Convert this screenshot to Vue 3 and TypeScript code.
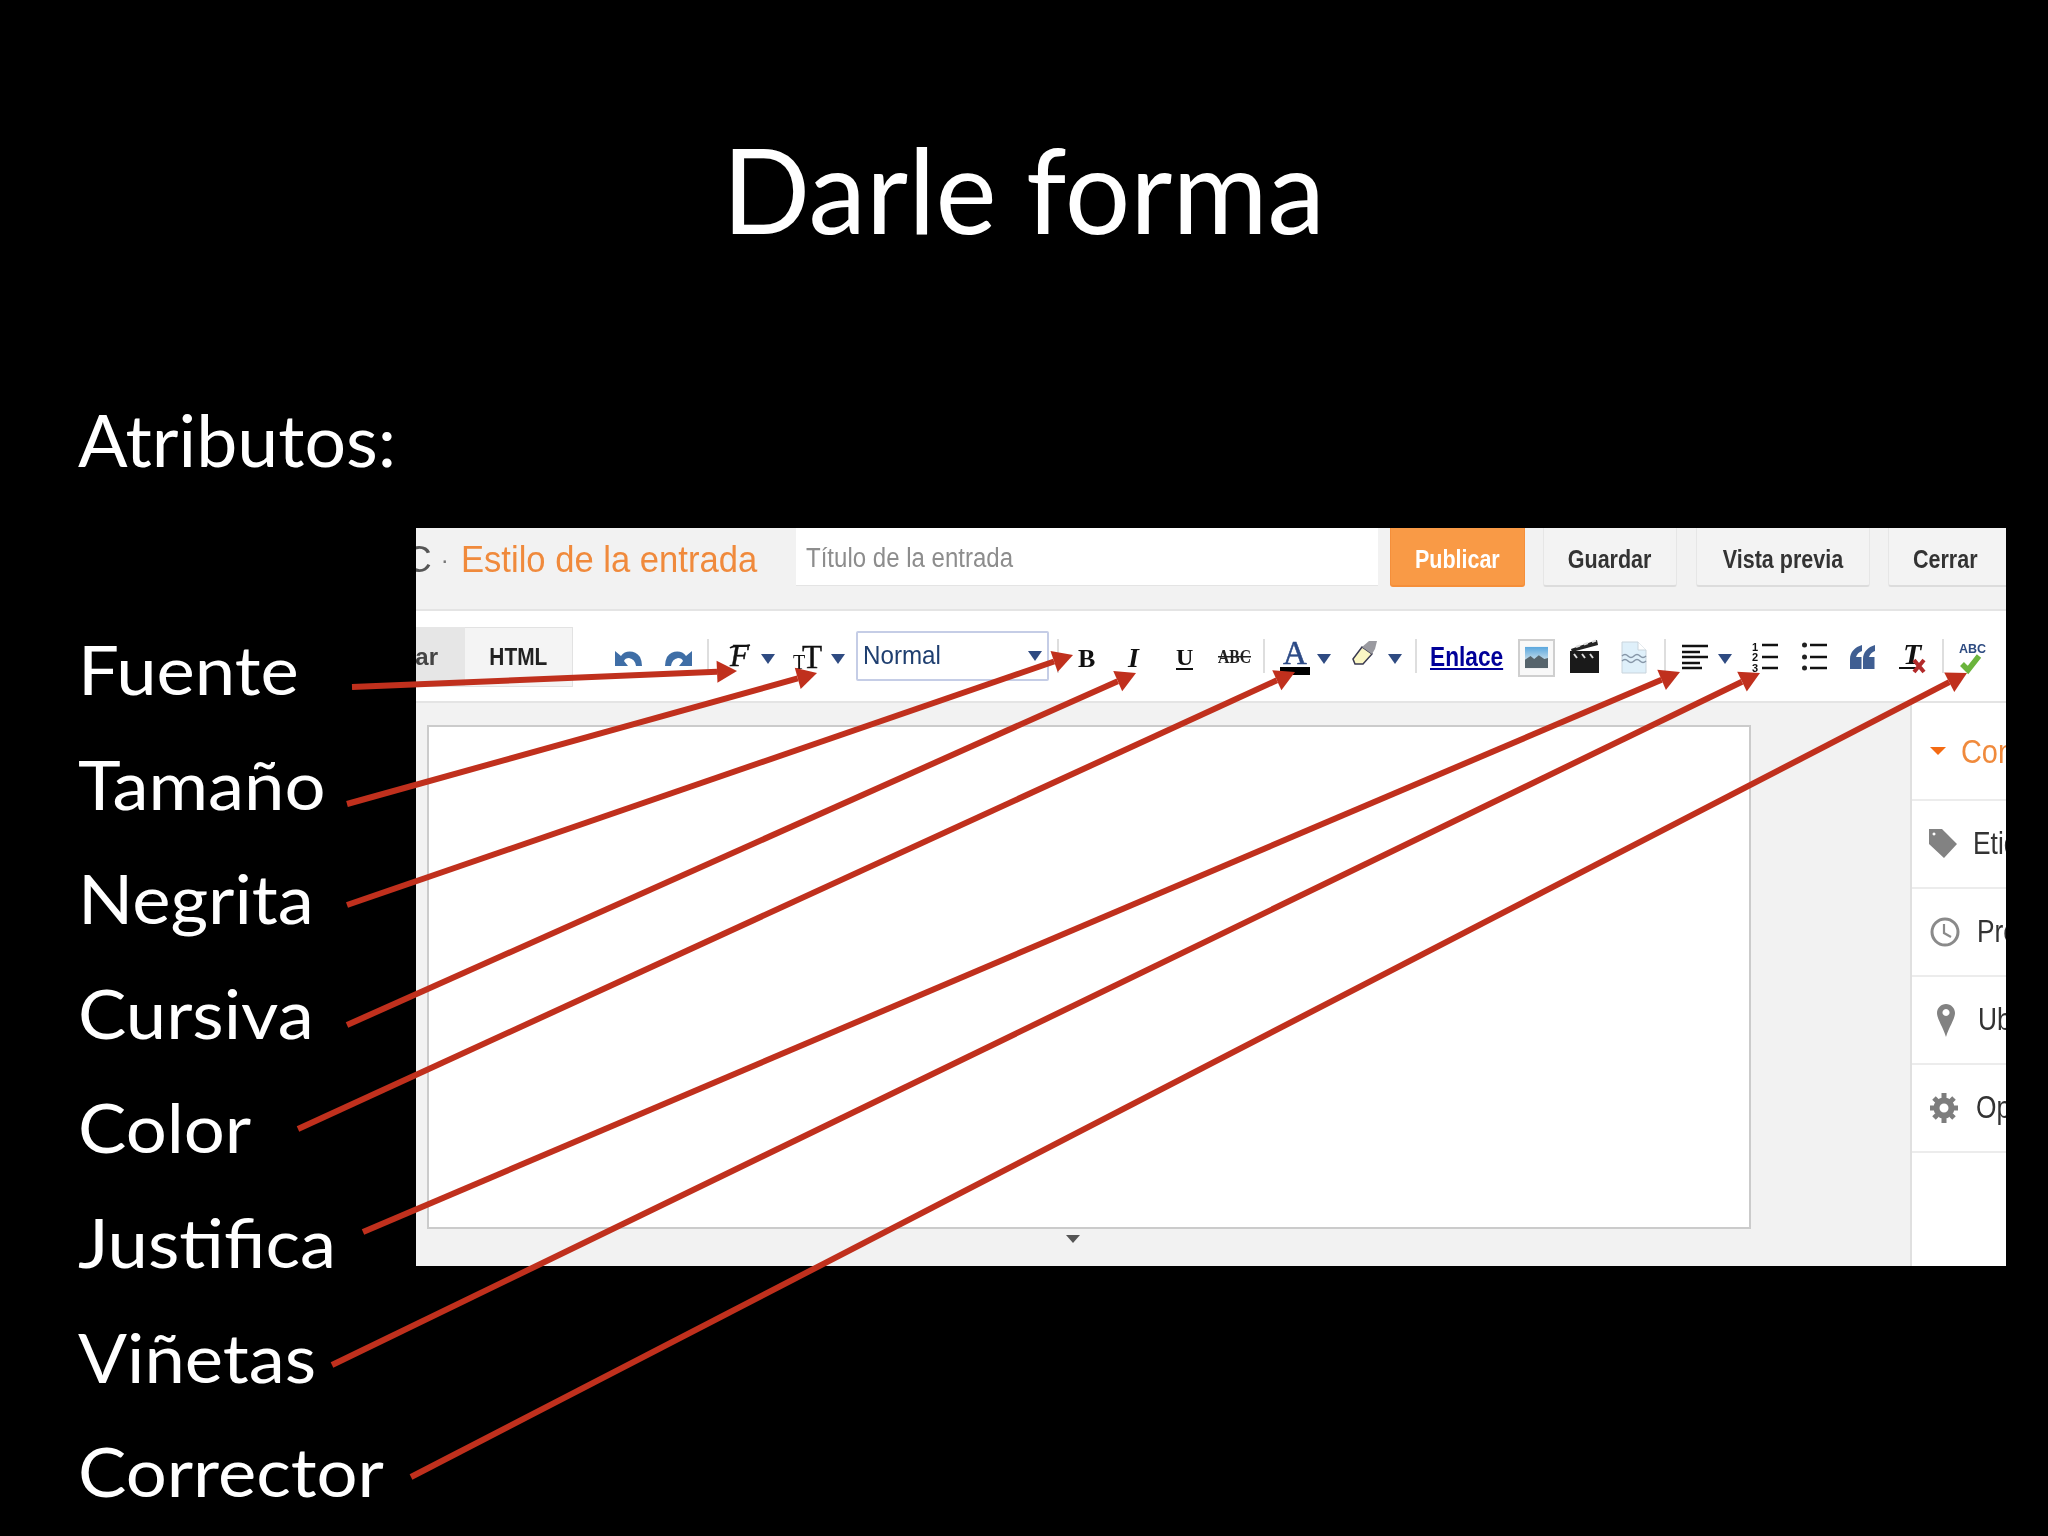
<script setup lang="ts">
interface Arrow { x1: number; y1: number; x2: number; y2: number }
const raw: Arrow[] = [
  { x1: 352, y1: 687, x2: 737, y2: 671 },
  { x1: 347, y1: 804, x2: 817, y2: 673 },
  { x1: 347, y1: 905, x2: 1073, y2: 655 },
  { x1: 347, y1: 1025, x2: 1136, y2: 673 },
  { x1: 298, y1: 1129, x2: 1295, y2: 672 },
  { x1: 363, y1: 1232, x2: 1680, y2: 672 },
  { x1: 332, y1: 1365, x2: 1760, y2: 673 },
  { x1: 411, y1: 1477, x2: 1967, y2: 673 },
]
const arrows = raw.map((a) => {
  const dx = a.x2 - a.x1
  const dy = a.y2 - a.y1
  const len = Math.hypot(dx, dy)
  const ux = dx / len
  const uy = dy / len
  const bx = a.x2 - ux * 20
  const by = a.y2 - uy * 20
  const head = `${a.x2},${a.y2} ${bx - uy * 11},${by + ux * 11} ${bx + uy * 11},${by - ux * 11}`
  return { ...a, bx, by, head }
})
const labels = ['Fuente', 'Tamaño', 'Negrita', 'Cursiva', 'Color', 'Justifica', 'Viñetas', 'Corrector']
</script>

<template>
  <div class="slide">
    <h1 class="title"><span>Darle forma</span></h1>
    <div class="content">
      <div class="left">
        <div class="attr"><span>Atributos:</span></div>
        <ul class="labels">
          <li v-for="l in labels" :key="l"><span>{{ l }}</span></li>
        </ul>
      </div>
      <div class="panel">
        <div class="head">
          <div class="crumb">
            <span class="c">C</span><span class="dot">·</span><span class="post">Estilo de la entrada</span>
          </div>
          <div class="input"><span>Título de la entrada</span></div>
          <div class="btn publish"><span>Publicar</span></div>
          <div class="btn save"><span>Guardar</span></div>
          <div class="btn preview"><span>Vista previa</span></div>
          <div class="btn close"><span>Cerrar</span></div>
        </div>
        <div class="toolbar">
          <div class="tab compose"><span>Redactar</span></div>
          <div class="tab html"><span>HTML</span></div>

          <svg class="ic undo" viewBox="0 0 27 40"><path d="M0 14L6 19C10 13 20 13 25 20Q27 24 27 29H21Q20 22 14 21Q10 21 9 24L13 29H0Z" fill="#3f6ea6"/></svg>
          <svg class="ic redo" viewBox="0 0 27 40"><path d="M27 14L21 19C17 13 7 13 2 20Q0 24 0 29H6Q7 22 13 21Q17 21 18 24L14 29H27Z" fill="#3f6ea6"/></svg>
          <i class="sep s1"></i>
          <svg class="ic font" viewBox="0 0 21 40"><text x="1" y="29" class="serif it" font-size="31" fill="#111" stroke="#111" stroke-width=".5">F</text><path d="M1 11C6 7 13 11 21 8" fill="none" stroke="#111" stroke-width="1.6"/></svg>
          <svg class="ic tri t1" viewBox="0 0 14 40"><path d="M0 17H14L7 27Z"/></svg>
          <svg class="ic tsize" viewBox="0 0 29 40"><text x="0" y="32" class="serif" font-size="20" fill="#111">T</text><text x="9" y="31" class="serif" font-size="33" fill="#111" stroke="#111" stroke-width=".4">T</text></svg>
          <svg class="ic tri t2" viewBox="0 0 14 40"><path d="M0 17H14L7 27Z"/></svg>
          <div class="select"><span>Normal</span><svg class="seltri" viewBox="0 0 14 10"><path d="M0 0H14L7 10Z"/></svg></div>
          <i class="sep s2"></i>
          <svg class="ic bold" viewBox="0 0 17 40"><text x="0" y="30" class="serif" font-weight="700" font-size="26" fill="#111">B</text></svg>
          <svg class="ic ital" viewBox="0 0 17 40"><text x="1" y="30" class="serif it" font-weight="700" font-size="28" fill="#111">I</text></svg>
          <svg class="ic under" viewBox="0 0 17 40"><text x="0" y="28" class="serif" font-weight="700" font-size="24" fill="#111">U</text><rect x="0" y="31" width="17" height="2" fill="#111"/></svg>
          <svg class="ic strike" viewBox="0 0 33 40"><text x="0" y="26" class="serif" font-weight="700" font-size="18" textLength="33" lengthAdjust="spacingAndGlyphs" fill="#222">ABC</text><rect x="0" y="19" width="33" height="1.5" fill="#222"/></svg>
          <i class="sep s3"></i>
          <svg class="ic color" viewBox="0 0 30 40"><text x="3" y="27" class="serif" font-size="33" fill="#2c4a86" stroke="#2c4a86" stroke-width=".5">A</text><rect x="0" y="30" width="30" height="8" fill="#000"/></svg>
          <svg class="ic tri t3" viewBox="0 0 14 40"><path d="M0 17H14L7 27Z"/></svg>
          <svg class="ic marker" viewBox="0 0 25 40"><path d="M1 22L10 10L20 17L11 27H3Z" fill="#fbf7c4" stroke="#3a3a50" stroke-width="1.5"/><path d="M10 10L17 4H25L23 12L20 17Z" fill="#9a9aa0"/></svg>
          <svg class="ic tri t4" viewBox="0 0 14 40"><path d="M0 17H14L7 27Z"/></svg>
          <i class="sep s4"></i>
          <div class="link"><span>Enlace</span></div>
          <div class="photo"><svg viewBox="0 0 25 23"><defs><linearGradient id="sky" x1="0" y1="0" x2="0" y2="1"><stop offset="0" stop-color="#5aa7de"/><stop offset=".55" stop-color="#b6d5e8"/><stop offset="1" stop-color="#7d8a90"/></linearGradient></defs><rect width="25" height="23" fill="url(#sky)"/><path d="M0 23V14L6 10L10 13L15 9L21 13L25 12V23Z" fill="#56646c"/></svg></div>
          <svg class="ic film" viewBox="0 0 29 40"><rect x="0" y="14" width="29" height="22" fill="#1a1a1a"/><path d="M1 12L27 3L28 8L2 15Z" fill="#222"/><path d="M6 10L10 8.500M14 7.500L18 6M22 5L26 3.500M4 17L7 21M12 17L15 21M20 17L23 21" stroke="#ddd" stroke-width="2"/></svg>
          <svg class="ic docu" viewBox="0 0 24 40"><path d="M0 5H16L24 13V36H0Z" fill="#dff0fa" stroke="#c9d4dc"/><path d="M16 5V13H24" fill="#fff" stroke="#c9d4dc"/><path d="M0 19Q3 16 6 19T12 19T18 19T24 19M0 24Q3 21 6 24T12 24T18 24T24 24" fill="none" stroke="#8797a8" stroke-width="1.500"/></svg>
          <i class="sep s5"></i>
          <svg class="ic align" viewBox="0 0 26 40"><path d="M0 9H26M0 15H18M0 20H26M0 26H18M0 31H20" stroke="#111" stroke-width="2.300"/></svg>
          <svg class="ic tri t5" viewBox="0 0 14 40"><path d="M0 17H14L7 27Z"/></svg>
          <svg class="ic numl" viewBox="0 0 26 40"><text x="0" y="14" class="sans" font-size="11" font-weight="700" fill="#111">1</text><text x="0" y="24" class="sans" font-size="11" font-weight="700" fill="#111">2</text><text x="0" y="35" class="sans" font-size="11" font-weight="700" fill="#111">3</text><path d="M10 8H26M10 20H26M10 31H26" stroke="#111" stroke-width="2.300"/></svg>
          <svg class="ic bull" viewBox="0 0 25 40"><circle cx="2.500" cy="8" r="2.500" fill="#222"/><circle cx="2.500" cy="20" r="2.500" fill="#222"/><circle cx="2.500" cy="31" r="2.500" fill="#222"/><path d="M8 8H25M8 20H25M8 31H25" stroke="#111" stroke-width="2.300"/></svg>
          <svg class="ic quote" viewBox="0 0 25 40"><path d="M12 8C5 10 0 15 0 22V32H11.500V20H6C7 17 9 15 12 14ZM25 8C18 10 13 15 13 22V32H24.500V20H19C20 17 22 15 25 14Z" fill="#3f5e92"/></svg>
          <svg class="ic clear" viewBox="0 0 24 40"><text x="1" y="27" class="serif it" font-weight="700" font-size="30" fill="#111">T</text><rect x="-3" y="30" width="18" height="2" fill="#111"/><path d="M12 23L22 35M22 23L12 35" stroke="#b22a2a" stroke-width="4"/></svg>
          <i class="sep s6"></i>
          <svg class="ic spell" viewBox="0 0 27 40"><text x="0" y="16" class="sans" font-weight="700" font-size="12.500" fill="#2c4a80">ABC</text><path d="M3 27L9 33L20 19" fill="none" stroke="#6bb43c" stroke-width="5.500"/></svg>
        </div>
        <div class="body">
          <div class="main">
            <div class="editor"></div>
            <div class="grip"></div>
          </div>
          <aside class="side">
            <div class="row first"><i class="caret"></i><span class="rlabel orange">Configuración</span></div>
            <div class="row">
              <svg class="ri tag" viewBox="0 0 28 30"><path fill-rule="evenodd" d="M0 0H13L28 15L15 29L0 15ZM5 3.500a1.500 1.500 0 1 0 .01 0Z"/></svg>
              <span class="rlabel">Etiquetas</span>
            </div>
            <div class="row">
              <svg class="ri clock" viewBox="0 0 30 32"><circle cx="15" cy="16" r="13" fill="none" stroke="#8a8a8a" stroke-width="3"/><path d="M14 8V17L21 21" fill="none" stroke="#8a8a8a" stroke-width="2.200"/></svg>
              <span class="rlabel">Programar</span>
            </div>
            <div class="row">
              <svg class="ri pin" viewBox="0 0 18 33"><path fill-rule="evenodd" d="M9 0C14 0 18 4 18 9C18 15 12 23 9 33C6 23 0 15 0 9C0 4 4 0 9 0ZM9 5a3.500 3.500 0 1 0 .01 0Z"/></svg>
              <span class="rlabel">Ubicación</span>
            </div>
            <div class="row">
              <svg class="ri gear" viewBox="0 0 30 32"><circle cx="15" cy="16" r="7.500" fill="none" stroke="#7d7d7d" stroke-width="6"/><path d="M15 1V31M1 16H29M5 6L25 26M25 6L5 26" stroke="#7d7d7d" stroke-width="5" stroke-dasharray="6 18"/></svg>
              <span class="rlabel">Opciones</span>
            </div>
          </aside>
        </div>
      </div>
    </div>
    <svg class="overlay" viewBox="0 0 2048 1536">
      <g v-for="a in arrows" :key="a.x1 + '-' + a.y1">
        <line :x1="a.x1" :y1="a.y1" :x2="a.bx" :y2="a.by" stroke="#c0301d" stroke-width="6" />
        <polygon :points="a.head" fill="#c0301d" />
      </g>
    </svg>
  </div>
</template>

<style>
html, body { margin: 0; background: #000; }
</style>

<style scoped>
.slide {
  position: relative;
  width: 2048px;
  height: 1536px;
  overflow: hidden;
  background: #000;
  color: #fff;
  font-family: Lato, "Open Sans", sans-serif;
}
.title {
  margin: 0;
  height: 300px;
  padding-top: 121px;
  box-sizing: border-box;
  font-size: 118px;
  font-weight: 400;
  line-height: 136px;
  text-align: center;
}
.title span { display: inline-block; transform: scaleX(0.98); }
.content {
  display: flex;
}
.left {
  width: 416px;
  flex: none;
  padding-left: 78px;
  box-sizing: border-box;
}
.attr {
  height: 312px;
  padding-top: 99px;
  box-sizing: border-box;
  font-size: 72px;
  line-height: 80px;
  white-space: nowrap;
}
.attr span { display: inline-block; transform: scaleX(1.02); transform-origin: left center; }
.labels span { display: inline-block; transform: scaleX(1.065); transform-origin: left center; }
.labels {
  list-style: none;
  margin: 0;
  padding: 0;
  font-size: 68px;
  line-height: 114.600px;
}
.panel {
  width: 1590px;
  height: 738px;
  margin-top: 228px;
  flex: none;
  background: #f2f2f2;
  overflow: hidden;
  display: flex;
  flex-direction: column;
  font-family: "Liberation Sans", Arial, sans-serif;
  filter: blur(0.45px);
}
.head {
  height: 83px;
  flex: none;
  box-sizing: border-box;
  display: flex;
  border-bottom: 2px solid #e4e4e4;
}
.crumb {
  width: 380px;
  flex: none;
  display: flex;
  align-items: center;
  padding-bottom: 18px;
  box-sizing: border-box;
  overflow: hidden;
  font-size: 37px;
  color: #f08a3c;
  white-space: nowrap;
  font-weight: 400;
}
.crumb .c { color: #555; margin-left: -11px; }
.crumb .dot { color: #777; margin-left: 9px; width: 20px; font-size: 24px; }
.crumb .post { display: inline-block; transform: scaleX(0.935); transform-origin: left center; }
.input {
  width: 582px;
  height: 58px;
  flex: none;
  background: #fff;
  border-bottom: 1px solid #e4e4e4;
  display: flex;
  align-items: center;
  padding: 4px 0 0 10px;
  box-sizing: border-box;
  font-size: 27px;
  color: #8d8d8d;
  white-space: nowrap;
}
.input span { display: inline-block; transform: scaleX(0.89); transform-origin: left center; }
.btn {
  height: 59px;
  flex: none;
  box-sizing: border-box;
  display: flex;
  align-items: center;
  justify-content: center;
  padding-top: 6px;
  font-size: 25px;
  font-weight: 700;
  color: #333;
  background: #f3f3f3;
  border: 1px solid #e6e6e6;
  border-top: 0;
  border-bottom: 2px solid #dcdcdc;
  border-radius: 0 0 3px 3px;
  white-space: nowrap;
}
.btn span { display: inline-block; transform: scaleX(0.86); }
.publish { width: 135px; margin-left: 12px; background: #f99a46; border-color: #f58f3a; color: #fff; }
.save { width: 134px; margin-left: 18px; }
.preview { width: 174px; margin-left: 19px; }
.close { width: 140px; margin-left: 18px; justify-content: flex-start; padding-left: 24px; }
.close span { transform-origin: left center; }

.toolbar {
  height: 92px;
  flex: none;
  box-sizing: border-box;
  background: #fff;
  border-bottom: 2px solid #e4e4e4;
  display: flex;
  align-items: flex-start;
  padding-top: 26px;
}
.tab {
  height: 60px;
  margin-top: -10px;
  flex: none;
  box-sizing: border-box;
  display: flex;
  align-items: center;
  font-size: 24px;
  font-weight: 700;
  color: #222;
  overflow: hidden;
  white-space: nowrap;
}
.compose { width: 49px; background: #e6e6e6; justify-content: flex-end; padding-right: 27px; color: #444; }
.html { width: 108px; background: #f4f4f4; border: 1px solid #e2e2e2; border-left: 0; justify-content: center; }
.html span { display: inline-block; transform: scaleX(0.87); }
.ic { height: 40px; flex: none; display: block; overflow: visible; }
.serif { font-family: "Liberation Serif", serif; }
.sans { font-family: "Liberation Sans", sans-serif; }
.it { font-style: italic; }
.tri { width: 14px; fill: #2f4b82; }
.sep { width: 2px; height: 34px; margin-top: 2px; flex: none; background: #dedede; }
.undo { width: 27px; margin-left: 42px; }
.redo { width: 27px; margin-left: 23px; }
.s1 { margin-left: 15px; }
.font { width: 21px; margin-left: 20px; }
.t1 { margin-left: 11px; }
.tsize { width: 29px; margin-left: 18px; }
.t2 { margin-left: 9px; }
.select {
  width: 193px;
  height: 50px;
  margin-top: -6px;
  margin-left: 11px;
  flex: none;
  box-sizing: border-box;
  border: 2px solid #c5cde6;
  border-radius: 2px;
  display: flex;
  align-items: center;
  justify-content: space-between;
  padding: 0 5px 0 5px;
  font-size: 26px;
  color: #1f3f70;
}
.select span { display: inline-block; transform: scaleX(0.93); transform-origin: left center; margin-top: -2px; }
.seltri { width: 14px; height: 10px; fill: #2f4b82; }
.s2 { margin-left: 8px; }
.bold { width: 17px; margin-left: 19px; }
.ital { width: 17px; margin-left: 32px; }
.under { width: 17px; margin-left: 32px; }
.strike { width: 33px; margin-left: 25px; }
.s3 { margin-left: 12px; }
.color { width: 30px; margin-left: 15px; }
.t3 { margin-left: 7px; }
.marker { width: 25px; margin-left: 21px; }
.t4 { margin-left: 11px; }
.s4 { margin-left: 13px; }
.link {
  width: 72px;
  height: 40px;
  margin-left: 13px;
  flex: none;
  overflow: visible;
  white-space: nowrap;
  font-size: 27px;
  font-weight: 700;
  line-height: 40px;
  color: #000099;
}
.link span { display: inline-block; transform: scaleX(0.84); transform-origin: left center; text-decoration: underline; }
.photo {
  width: 37px;
  height: 38px;
  margin-left: 16px;
  margin-top: 2px;
  flex: none;
  box-sizing: border-box;
  border: 2px solid #cfcfcf;
  background: #f8f8f8;
  padding: 5px 5px;
}
.photo svg { display: block; width: 100%; height: 23px; }
.film { width: 29px; margin-left: 15px; }
.docu { width: 24px; margin-left: 23px; }
.s5 { margin-left: 18px; }
.align { width: 26px; margin-left: 16px; }
.t5 { margin-left: 10px; }
.numl { width: 26px; margin-left: 20px; }
.bull { width: 25px; margin-left: 24px; }
.quote { width: 25px; margin-left: 23px; }
.clear { width: 24px; margin-left: 27px; }
.s6 { margin-left: 16px; }
.spell { width: 27px; margin-left: 15px; }

.body {
  flex: 1;
  min-height: 0;
  display: flex;
}
.main {
  width: 1494px;
  flex: none;
  padding: 22px 0 0 11px;
  box-sizing: border-box;
}
.editor {
  width: 1324px;
  height: 504px;
  box-sizing: border-box;
  background: #fff;
  border: 2px solid #cbcbcb;
}
.grip {
  width: 0;
  height: 0;
  margin: 6px 0 0 639px;
  border-left: 7px solid transparent;
  border-right: 7px solid transparent;
  border-top: 8px solid #555;
}
.side {
  flex: 1;
  min-width: 0;
  background: #fff;
  border-left: 2px solid #e0e0e0;
  overflow: hidden;
}
.row {
  height: 88px;
  box-sizing: border-box;
  border-bottom: 2px solid #ececec;
  display: flex;
  align-items: center;
  padding-left: 17px;
  white-space: nowrap;
}
.row.first { height: 98px; }
.caret {
  width: 0;
  height: 0;
  flex: none;
  border-left: 8px solid transparent;
  border-right: 8px solid transparent;
  border-top: 8px solid #f46a12;
  margin-left: 1px;
}
.rlabel {
  display: inline-block;
  font-size: 31px;
  color: #333;
  transform: scaleX(0.85);
  transform-origin: left center;
}
.orange { color: #f08a3c; font-size: 34px; margin-left: 15px; }
.ri { flex: none; display: block; fill: #828282; }
.tag { width: 28px; height: 30px; margin-right: 16px; }
.clock { width: 30px; height: 32px; margin-left: 1px; margin-right: 17px; }
.pin { width: 18px; height: 33px; margin-left: 8px; margin-right: 23px; }
.gear { width: 30px; height: 32px; margin-right: 17px; }
.overlay {
  position: absolute;
  left: 0;
  top: 0;
  width: 2048px;
  height: 1536px;
  pointer-events: none;
}
</style>
